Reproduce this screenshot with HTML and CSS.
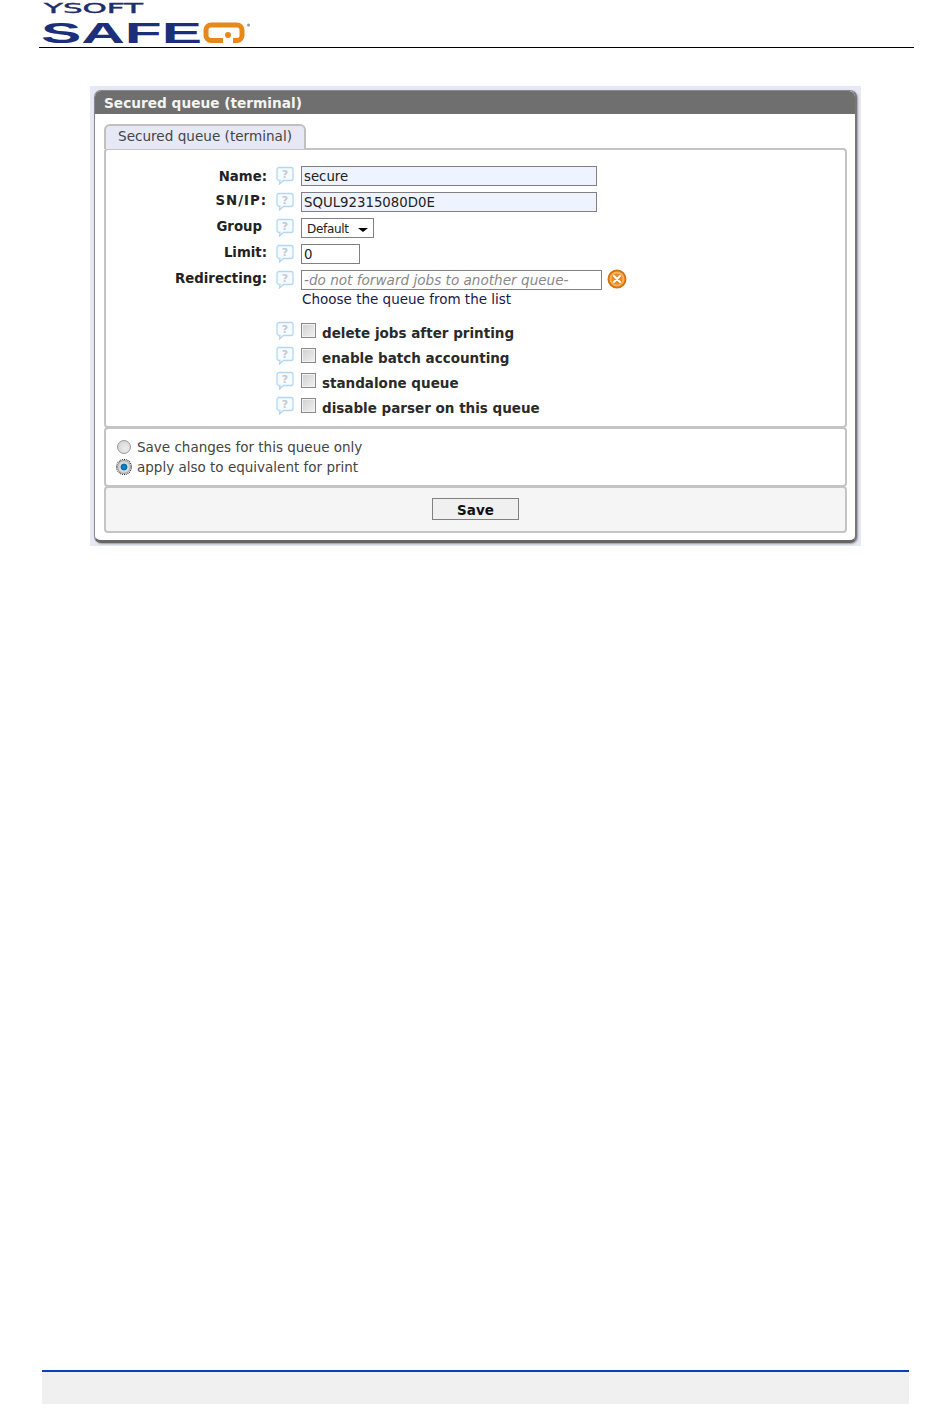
FILE: index.html
```html
<!DOCTYPE html>
<html lang="en">
<head>
  <meta charset="UTF-8" />
  <title>YSoft SafeQ - Secured queue</title>
  <link rel="stylesheet" href="styles.css">
</head>
<body>
  <svg class="defs" width="0" height="0">
    <symbol id="bubble" viewBox="0 0 18 19">
      <path d="M3 1.500h12a2 2 0 0 1 2 2v9a2 2 0 0 1-2 2H7.500L3.500 18l.5-3.500H3a2 2 0 0 1-2-2v-9a2 2 0 0 1 2-2z" fill="#f6fbff" stroke="#b5d8f2" stroke-width="1.300"/>
    </symbol>
  </svg>

  <div class="page">
    <!-- Logo -->
    <header class="top">
      <svg class="logo" width="212" height="46" viewBox="0 0 212 46">
        <text x="1" y="13" class="logo-small" textLength="99" lengthAdjust="spacingAndGlyphs">YSOFT</text>
        <text x="-2" y="43" class="logo-big" textLength="161" lengthAdjust="spacingAndGlyphs">SAFE</text>
        <path d="M180 40.500H168a5 5 0 0 1-5-5v-5.500a5 5 0 0 1 5-5h26a5 5 0 0 1 5 5v5.500a5 5 0 0 1-5 5h-4" fill="none" stroke="#e8881a" stroke-width="5"/>
        <circle cx="185" cy="35" r="3" fill="#e8881a"/>
        <circle cx="205.500" cy="25" r="1.500" fill="#999"/>
      </svg>
    </header>

    <div class="frame">
      <div class="panel">
        <div class="panel-title">Secured queue (terminal)</div>
        <div class="panel-body">
          <div class="tabs"><div class="tab">Secured queue (terminal)</div></div>

          <div class="box box-form">
            <div class="row">
              <label class="lbl lbl-first">Name:</label>
              <svg class="help"><use href="#bubble"/><text x="9" y="12" text-anchor="middle" class="help-mark">?</text></svg>
              <input class="inp inp-blue" type="text" value="secure">
            </div>
            <div class="row">
              <label class="lbl lbl-wide">SN/IP:</label>
              <svg class="help"><use href="#bubble"/><text x="9" y="12" text-anchor="middle" class="help-mark">?</text></svg>
              <input class="inp inp-blue" type="text" value="SQUL92315080D0E">
            </div>
            <div class="row">
              <label class="lbl lbl-group">Group</label>
              <svg class="help"><use href="#bubble"/><text x="9" y="12" text-anchor="middle" class="help-mark">?</text></svg>
              <div class="sel">Default</div>
            </div>
            <div class="row">
              <label class="lbl">Limit:</label>
              <svg class="help"><use href="#bubble"/><text x="9" y="12" text-anchor="middle" class="help-mark">?</text></svg>
              <input class="inp inp-short" type="text" value="0">
            </div>
            <div class="row">
              <label class="lbl">Redirecting:</label>
              <svg class="help"><use href="#bubble"/><text x="9" y="12" text-anchor="middle" class="help-mark">?</text></svg>
              <input class="inp inp-redirect" type="text" placeholder="-do not forward jobs to another queue-">
              <svg class="clear" width="20" height="20" viewBox="0 0 20 20">
                <circle cx="10" cy="10" r="8.500" fill="#f6b35c" stroke="#d9730f" stroke-width="2"/>
                <circle cx="10" cy="10" r="5.500" fill="#f08a1c"/>
                <path d="M7 7l6 6M13 7l-6 6" stroke="#fff" stroke-width="2" stroke-linecap="round"/>
              </svg>
            </div>
            <div class="hint">Choose the queue from the list</div>

            <div class="checks">
              <div class="row-check">
                <svg class="help"><use href="#bubble"/><text x="9" y="12" text-anchor="middle" class="help-mark">?</text></svg>
                <input class="chk" type="checkbox">
                <span class="chk-text">delete jobs after printing</span>
              </div>
              <div class="row-check">
                <svg class="help"><use href="#bubble"/><text x="9" y="12" text-anchor="middle" class="help-mark">?</text></svg>
                <input class="chk" type="checkbox">
                <span class="chk-text">enable batch accounting</span>
              </div>
              <div class="row-check">
                <svg class="help"><use href="#bubble"/><text x="9" y="12" text-anchor="middle" class="help-mark">?</text></svg>
                <input class="chk" type="checkbox">
                <span class="chk-text">standalone queue</span>
              </div>
              <div class="row-check">
                <svg class="help"><use href="#bubble"/><text x="9" y="12" text-anchor="middle" class="help-mark">?</text></svg>
                <input class="chk" type="checkbox">
                <span class="chk-text">disable parser on this queue</span>
              </div>
            </div>
          </div>

          <div class="box box-radios">
            <div class="row-radio"><span class="radio"></span>Save changes for this queue only</div>
            <div class="row-radio"><span class="radio radio-on"></span>apply also to equivalent for print</div>
          </div>

          <div class="box box-save">
            <button class="save" type="button">Save</button>
          </div>
        </div>
      </div>
    </div>

    <footer class="bottom"></footer>
  </div>
</body>
</html>
```

FILE: styles.css
```css
* {
  margin: 0; padding: 0; box-sizing: border-box; font-family: 'DejaVu Sans', Verdana, sans-serif;
}

body {
  background: #fff;
  color: #333;
  font-size: 13px;
}

.defs {
  position: absolute;
}

.page {
  height: 1419px;
  display: flex;
  flex-direction: column;
  overflow: hidden;
}

.top {
  margin: 0 36px 0 39px;
  height: 48px;
  border-bottom: 1px solid #000;
  padding-left: 4px;
}

.logo {
  display: block;
  overflow: visible;
}

.logo-small {
  font-size: 14px;
  fill: #1f2e6b;
  stroke: #1f2e6b;
  stroke-width: 0.400px;
}

.logo-big {
  font-family: 'Liberation Sans', Arial, sans-serif;
  font-size: 29px;
  font-weight: bold;
  fill: #1d2f78;
}

.help-mark {
  font-size: 11px;
  font-weight: bold;
  fill: #c4c9d0;
}

.frame {
  margin: 38px 89px 0 90px;
  padding: 4px;
  height: 460px;
  background: #e6e8f6;
}

.panel {
  height: 453px;
  background: #fff;
  border: 1px solid #8a8a8a;
  border-right: 2px solid #777;
  border-bottom: 3px solid #666;
  border-radius: 7px;
  box-shadow: 1px 1px 2px #999;
}

.panel-title {
  height: 23px;
  background: #6f6f6f;
  color: #f4f4f4;
  font-weight: bold;
  font-size: 13.700px;
  line-height: 25px;
  padding-left: 9px;
  border-radius: 6px 6px 0 0;
}

.panel-body {
  padding: 10px 8px 0 9px;
}

.tabs {
  display: flex;
  height: 24px;
}

.tab {
  width: 202px;
  height: 25px;
  background: #e6e8f6;
  border: 2px solid #c0c0c0;
  border-bottom: none;
  border-radius: 6px 6px 0 0;
  color: #444;
  font-size: 13.600px;
  line-height: 20px;
  padding-left: 12px;
  position: relative;
}

.box {
  border: 2px solid #c4c4c4;
  border-radius: 4px;
  background: #fff;
}

.box-form {
  height: 280px;
  padding-top: 16px;
}

.row {
  display: flex;
  align-items: center;
  height: 20px;
  margin-bottom: 6px;
}

.lbl {
  width: 161px;
  text-align: right;
  font-weight: bold;
  color: #222;
  font-size: 13.300px;
  position: relative;
  top: -2px;
}

.lbl-first {
  top: 0;
}

.lbl-wide {
  letter-spacing: 1px;
}

.lbl-group {
  padding-right: 5px;
}

.help {
  width: 18px;
  height: 19px;
  flex: none;
  position: relative;
  top: -1px;
}

.row .help {
  margin: 0 7px 0 9px;
}

.inp {
  height: 20px;
  border: 1px solid #808080;
  color: #222;
  font-size: 13.300px;
  padding: 1px 2px 0;
  background: #fff;
}

.inp-blue {
  width: 296px;
  background: #eef3ff;
}

.inp-short {
  width: 59px;
}

.inp-redirect {
  width: 301px;
}

.inp-redirect::placeholder {
  color: #888;
  font-size: 13.600px;
  font-style: italic;
  opacity: 1;
}

.sel {
  width: 73px;
  height: 20px;
  border: 1px solid #808080;
  color: #222;
  font-size: 12px;
  letter-spacing: -0.300px;
  line-height: 20px;
  padding-left: 5px;
  position: relative;
}

.sel::after {
  content: "";
  position: absolute;
  right: 5px;
  top: 9px;
  border: 4px solid transparent;
  border-top: 4px solid #000;
  border-left-width: 5px;
  border-right-width: 5px;
}

.clear {
  margin: -2px 0 0 5px;
}

.hint {
  margin: -6px 0 0 196px;
  height: 18px;
  line-height: 18px;
  color: #1a1a4a;
  font-size: 13.500px;
}

.checks {
  margin-top: 12px;
}

.row-check {
  display: flex;
  align-items: center;
  height: 25px;
  padding-left: 170px;
}

.row-check .help {
  margin-right: 7px;
  top: -2px;
}

.chk {
  appearance: none;
  width: 15px;
  height: 15px;
  border: 1px solid #8a8a8a;
  background: linear-gradient(135deg, #cfcfcf, #f2f2f2);
  box-shadow: inset 0 0 0 1px #f2f2f2;
  position: relative;
  top: -2px;
}

.chk-text {
  margin-left: 6px;
  font-weight: bold;
  color: #2a2a2a;
  font-size: 13.500px;
}

.box-radios {
  height: 60px;
  margin-top: -1px;
  padding: 8px 0 0 11px;
}

.row-radio {
  display: flex;
  align-items: center;
  height: 20px;
  color: #444;
  font-size: 13.500px;
}

.radio {
  width: 14px;
  height: 14px;
  margin-right: 6px;
  border-radius: 50%;
  border: 1px solid #999;
  background: radial-gradient(circle at 60% 60%, #eee, #ccc);
}

.radio-on {
  background: radial-gradient(circle, #0a8fd8 0, #0a6aa8 35%, #ddd 45%, #bbb 100%);
  outline: 1px dotted #000;
}

.box-save {
  height: 47px;
  margin-top: -1px;
  background: #f5f5f5;
  display: flex;
  justify-content: center;
  padding-top: 10px;
}

.save {
  width: 87px;
  height: 22px;
  padding-top: 2px;
  background: #f0f0f0;
  border: 1px solid #808080;
  color: #111;
  font-weight: bold;
  font-size: 13.500px;
}

.bottom {
  margin: auto 41px 15px 42px;
  height: 34px;
  background: #f0f0f0;
  border-top: 2px solid #0f3fb5;
}
```
